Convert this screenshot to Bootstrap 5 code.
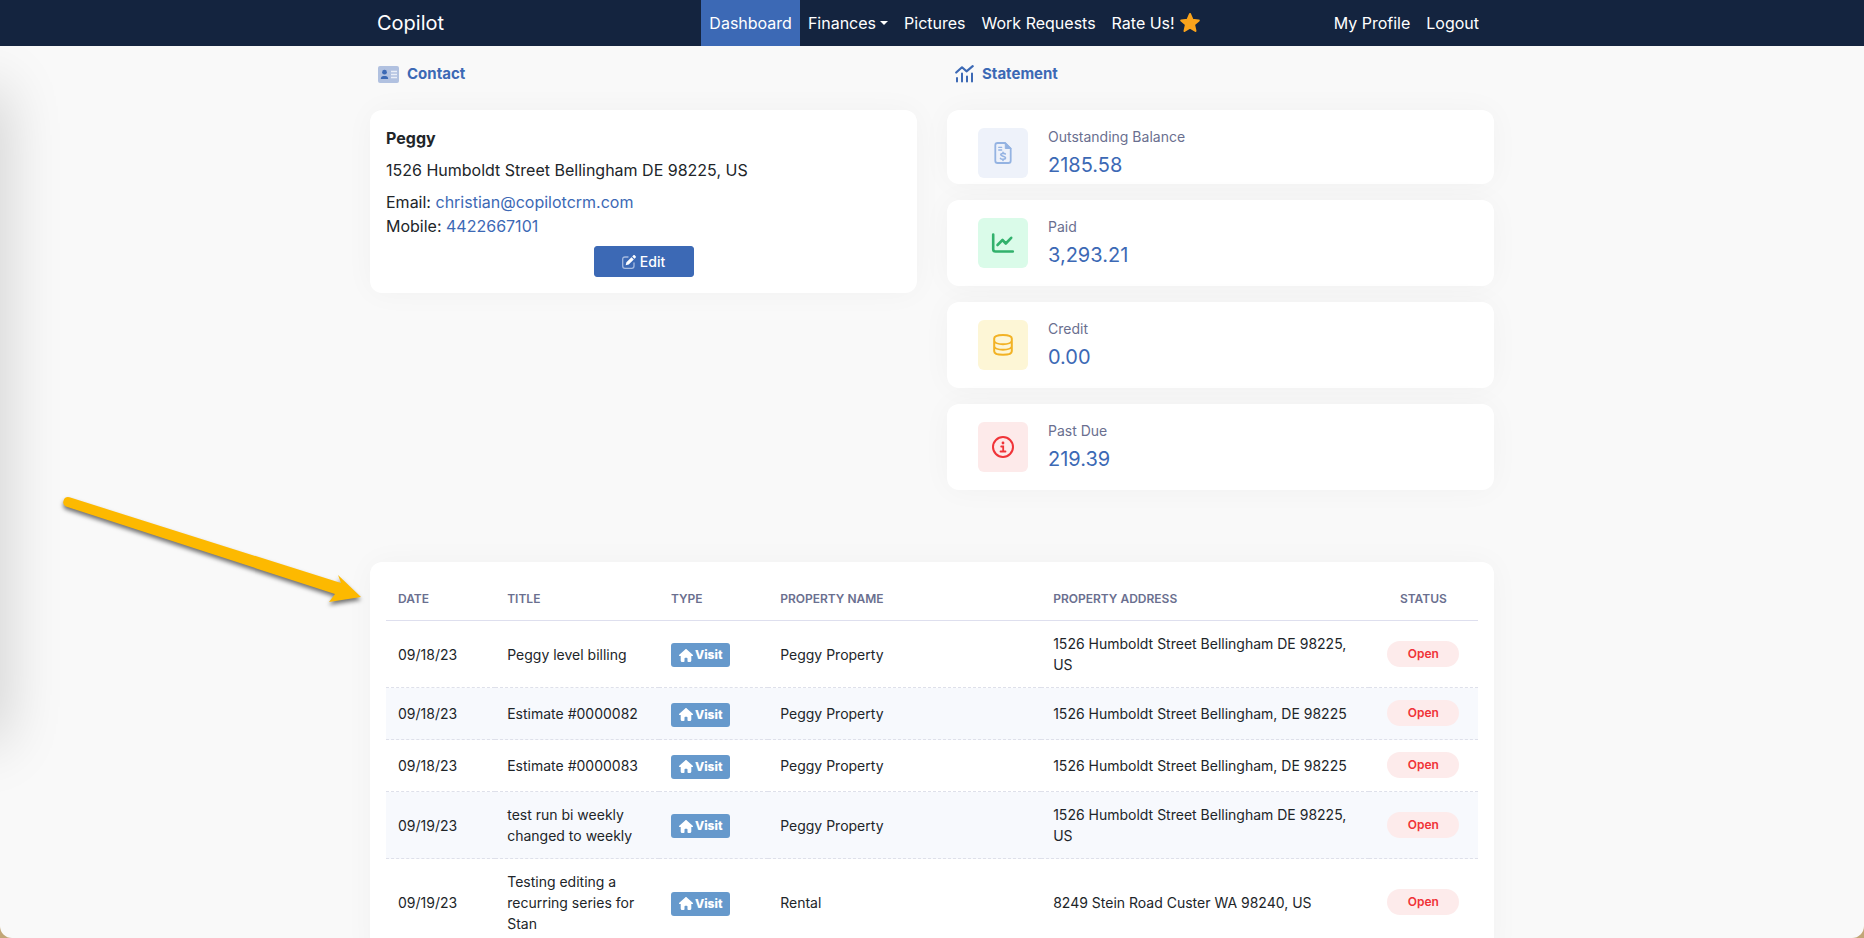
<!DOCTYPE html>
<html lang="en">
<head>
<meta charset="utf-8">
<meta name="viewport" content="width=device-width, initial-scale=1">
<title>Copilot</title>
<link href="https://cdn.jsdelivr.net/npm/bootstrap@5.3.0/dist/css/bootstrap.min.css" rel="stylesheet">
<style>
  :root { --brand: #3c69b5; --navy: #14243f; --muted: #6a6f8f; }
  html, body { height: 100%; }
  body { font-family: Inter, "Liberation Sans", sans-serif; font-size: 16px; line-height: 24px; color: #212529; background: #c2a677; }
  a { color: var(--brand); text-decoration: none; }
  .window { position: relative; height: 100vh; overflow: hidden auto; scrollbar-width: none; background: #f9f9f9; border-radius: 0 0 12px 12px; }
  .window::-webkit-scrollbar { display: none; }
  .edge-shade { position: absolute; left: -40px; top: 90px; width: 40px; height: 650px; box-shadow: 0 0 60px 0 rgba(0,0,0,.22); pointer-events: none; }
  .topbar { background: var(--navy); position: relative; z-index: 1; }
  .topbar-inner { max-width: 1110px; }
  .topbar .navbar-brand { color: #fff; font-size: 20px; line-height: 30px; }
  .topbar .nav-link { color: #fff; font-weight: 400; padding: 11px 8px; line-height: 24px; white-space: nowrap; }
  .topbar .nav-link.active { background: var(--brand); color: #fff; }
  .account-nav { margin-left: 117px; }
  .page { max-width: 1124px; }
  .page > .row { --bs-gutter-x: 30px; }
  .section-title { color: var(--brand); font-size: 15px; line-height: 24px; font-weight: 700; gap: 8px; padding: 16px 8px 24px; margin: 0; }
  .panel { background: #fff; border-radius: 12px; box-shadow: 0 0 30px rgba(0,0,0,.035); }
  .btn-edit { --bs-btn-color: #fff; --bs-btn-bg: var(--brand); --bs-btn-border-color: var(--brand); --bs-btn-hover-color: #fff; --bs-btn-hover-bg: #31589b; width: 100px; font-size: 14px; line-height: 21px; padding: 4px 8px; border-radius: 3px; font-weight: 500; }
  .stat { padding: 18px 31px; gap: 20px; margin-bottom: 16px; }
  .stat-tight { padding-bottom: 6px; }
  .stat-icon { width: 50px; height: 50px; border-radius: 6px; flex: none; }
  .stat-label { font-size: 14px; line-height: 18px; color: var(--muted); }
  .stat-value { font-size: 20px; line-height: 24px; color: var(--brand); margin-top: 7px; }
  .tint-blue { background: #eef2fa; color: #94b3e2; }
  .tint-green { background: #dafbe9; color: #32b16c; }
  .tint-yellow { background: #fdf6d6; color: #f2b224; }
  .tint-red { background: #fdeaea; color: #f03338; }
  .activity { margin-top: 56px; padding: 16px; position: relative; }
  .activity-table { table-layout: fixed; margin: 0; font-size: 14px; line-height: 21px; border-collapse: separate; border-spacing: 0; --bs-table-bg: transparent; }
  .activity-table th { font-size: 12px; line-height: 18px; font-weight: 600; color: var(--muted); text-transform: uppercase; padding: 12px; height: 43px; border-bottom: 1px solid #dedfee; white-space: nowrap; }
  .activity-table td { padding: 12px; height: 52px; vertical-align: middle; border-bottom: 1px dashed #dee0ea; color: #212529; }
  .activity-table tbody tr:nth-child(even) td { background: #f7f9fd; }
  .activity-table .status-cell { text-align: center; padding-left: 8px; padding-right: 8px; }
  .activity-table td.tag-cell { padding-top: 9px; padding-bottom: 7px; }
  .activity-table td.status-cell { padding-top: 7px; padding-bottom: 8px; }
  .tag-visit { background: #6699cc; color: #fff; font-size: 12px; line-height: 16px; font-weight: 800; padding: 4px 8px; border-radius: 3px; gap: 2px; vertical-align: middle; }
  .tag-open { background: #fdebeb; color: #f03338; font-size: 12px; line-height: 18px; font-weight: 600; width: 72px; padding: 4px 0; vertical-align: middle; }
  .pointer { position: absolute; left: -310px; top: -70px; overflow: visible; filter: drop-shadow(0 3px 2px rgba(0,0,0,.55)); pointer-events: none; }
</style>
</head>
<body>
<svg width="0" height="0" class="position-absolute" aria-hidden="true">
  <symbol id="house" viewBox="0 0 14 13"><path fill="currentColor" d="M6.200.4.300 5.700c-.6.600-.3 1.400.5 1.400h.9v4.400c0 .9.600 1.500 1.400 1.500h1.600c.5 0 .8-.3.800-.8V9.600c0-.5.300-.8.800-.8h1.400c.5 0 .8.300.8.800v2.600c0 .5.300.800.8.800h1.600c.8 0 1.400-.6 1.400-1.500V7.100h.9c.8 0 1.100-.8.500-1.400L7.800.4C7.300 0 6.700 0 6.200.4z"/></symbol>
</svg>
<div class="window">
  <div class="edge-shade"></div>
  <nav class="topbar navbar navbar-expand p-0">
    <div class="topbar-inner container-fluid p-0">
      <a class="navbar-brand p-0 m-0" href="#">Copilot</a>
      <ul class="navbar-nav ms-auto">
        <li class="nav-item"><a class="nav-link active" aria-current="page" href="#">Dashboard</a></li>
        <li class="nav-item dropdown"><a class="nav-link dropdown-toggle" href="#" role="button" data-bs-toggle="dropdown">Finances</a></li>
        <li class="nav-item"><a class="nav-link" href="#">Pictures</a></li>
        <li class="nav-item"><a class="nav-link" href="#">Work Requests</a></li>
        <li class="nav-item"><a class="nav-link d-flex align-items-center gap-1" href="#">Rate Us!
          <svg width="22" height="22" viewBox="0 0 22 22"><path d="M11 2l2.600 5.800 6.200.6-4.700 4.200 1.400 6.300-5.500-3.200-5.500 3.200 1.400-6.300L2.200 8.400l6.200-.6z" fill="#faa31b" stroke="#faa31b" stroke-width="2" stroke-linejoin="round"/></svg></a></li>
      </ul>
      <ul class="navbar-nav account-nav">
        <li class="nav-item"><a class="nav-link" href="#">My Profile</a></li>
        <li class="nav-item"><a class="nav-link" href="#">Logout</a></li>
      </ul>
    </div>
  </nav>

  <main class="page container-fluid p-0">
    <div class="row">
      <section class="col-6">
        <h2 class="section-title d-flex align-items-center">
          <svg width="21" height="17" viewBox="0 0 21 17"><rect width="21" height="17" rx="2" fill="#b1c1e0"/><circle cx="6.500" cy="6.200" r="2.400" fill="#3c69b5"/><path d="M2.800 13c0-2 1.200-3 2.700-3h2c1.500 0 2.700 1 2.700 3z" fill="#3c69b5"/><path d="M13 5.500h6M13 8.500h6M13 11.500h6" stroke="#e9eef8" stroke-width="1.300"/></svg>
          Contact</h2>
        <div class="panel p-3">
          <p class="fw-bold mb-2">Peggy</p>
          <p class="mb-2">1526 Humboldt Street Bellingham DE 98225, US</p>
          <div>Email: <a href="mailto:christian@copilotcrm.com">christian@copilotcrm.com</a></div>
          <div>Mobile: <a href="tel:4422667101">4422667101</a></div>
          <div class="d-flex justify-content-center pt-2">
            <button type="button" class="btn btn-edit d-flex align-items-center justify-content-center gap-1">
              <svg width="14" height="14" viewBox="0 0 14 14" fill="none"><path d="M6 2H3C1.500 2 .7 2.800.7 4.200V11c0 1.500.8 2.300 2.300 2.300h6.700c1.500 0 2.300-.8 2.300-2.300V8" stroke="#a6bbe0" stroke-width="1.300" stroke-linecap="round"/><path d="M3.700 10.300l.7-3L9.500 2.200l2.300 2.300-5.100 5.100zM10.200 1.500l1-1c.6-.6 1.200-.6 1.700 0l.6.6c.5.500.5 1.100 0 1.700l-1 1z" fill="#fff"/></svg>
              Edit</button>
          </div>
        </div>
      </section>

      <section class="col-6">
        <h2 class="section-title d-flex align-items-center">
          <svg width="19" height="18" viewBox="0 0 19 18" fill="none" stroke="#3c69b5" stroke-linecap="round" stroke-linejoin="round"><path d="M1.200 7.500 7 2.300l4.500 4L17.700 1.200" stroke-width="2.200"/><path d="M2 13v3.500M7 8.500v8M12 11.500v5M17 8.500v8" stroke-width="2"/></svg>
          Statement</h2>
        <div class="panel stat stat-tight d-flex">
          <div class="stat-icon tint-blue d-flex align-items-center justify-content-center">
            <svg width="18" height="24" viewBox="0 0 18 24" fill="none" stroke="currentColor" stroke-width="1.800" stroke-linecap="round" stroke-linejoin="round"><path d="M11 2H3.600C2.200 2 1.300 2.900 1.300 4.300v15.400c0 1.400.9 2.300 2.300 2.300h10.800c1.400 0 2.300-.9 2.300-2.300V7.600z"/><path d="M11.300 2v5.500h5.400z" fill="currentColor" stroke-width="1"/><path d="M4.700 6.300h3M4.700 9h3" stroke-width="1.300"/><path d="M11.300 13c-.5-.7-4.500-1.100-4.500.8s4.700 1 4.700 3-4.200 1.600-5 .6M9 11.200v1M9 18.400v1" stroke-width="1.600"/></svg>
          </div>
          <div><div class="stat-label">Outstanding Balance</div><div class="stat-value">2185.58</div></div>
        </div>
        <div class="panel stat d-flex">
          <div class="stat-icon tint-green d-flex align-items-center justify-content-center">
            <svg width="24" height="22" viewBox="0 0 24 22" fill="none" stroke="currentColor" stroke-width="2.600" stroke-linecap="round" stroke-linejoin="round"><path d="M2.200 2.500v14.700c0 1.500.8 2.300 2.300 2.300h17.300M6.500 13l5-5 3.300 3.500 5.400-5.700"/></svg>
          </div>
          <div><div class="stat-label">Paid</div><div class="stat-value">3,293.21</div></div>
        </div>
        <div class="panel stat d-flex">
          <div class="stat-icon tint-yellow d-flex align-items-center justify-content-center">
            <svg width="20" height="24" viewBox="0 0 20 24" fill="none" stroke="currentColor" stroke-width="2"><path d="M1.200 5.500C1.200 3.300 4.500 2 10 2s8.800 1.300 8.800 3.500v12.800c0 2.200-3.300 3.500-8.800 3.500s-8.800-1.300-8.800-3.500zM1.200 8C2 10 5.500 11.200 10 11.200s8-1.200 8.800-3.200M1.200 13.500c.8 2 4.300 3.200 8.800 3.200s8-1.200 8.800-3.200"/></svg>
          </div>
          <div><div class="stat-label">Credit</div><div class="stat-value">0.00</div></div>
        </div>
        <div class="panel stat d-flex">
          <div class="stat-icon tint-red d-flex align-items-center justify-content-center">
            <svg width="24" height="24" viewBox="0 0 24 24" fill="none" stroke="currentColor" stroke-width="2"><circle cx="12" cy="12" r="10"/><circle cx="12" cy="8" r="1.400" fill="currentColor" stroke="none"/><path d="M10.200 11.500h2v4.800M9.500 16.500h5" stroke-linecap="round" stroke-width="1.800"/></svg>
          </div>
          <div><div class="stat-label">Past Due</div><div class="stat-value">219.39</div></div>
        </div>
      </section>
    </div>

    <section class="panel activity">
      <svg class="pointer" width="305" height="115" viewBox="0 0 305 115" aria-hidden="true"><path d="M9.500 5.300A5 5 0 0 0 6 14.600L275 102l-6 8 32-5-23-22 3 8z" fill="#fdb900"/></svg>
      <table class="table table-borderless activity-table">
        <colgroup><col style="width:10%"><col style="width:15%"><col style="width:10%"><col style="width:25%"><col style="width:30%"><col style="width:10%"></colgroup>
        <thead>
          <tr><th scope="col">Date</th><th scope="col">Title</th><th scope="col">Type</th><th scope="col">Property Name</th><th scope="col">Property Address</th><th scope="col" class="status-cell">Status</th></tr>
        </thead>
        <tbody>
          <tr><td>09/18/23</td><td>Peggy level billing</td><td class="tag-cell"><span class="tag-visit d-inline-flex align-items-center"><svg width="14" height="13"><use href="#house"/></svg>Visit</span></td><td>Peggy Property</td><td>1526 Humboldt Street Bellingham DE 98225, US</td><td class="status-cell"><span class="tag-open d-inline-block rounded-pill">Open</span></td></tr>
          <tr><td>09/18/23</td><td>Estimate #0000082</td><td class="tag-cell"><span class="tag-visit d-inline-flex align-items-center"><svg width="14" height="13"><use href="#house"/></svg>Visit</span></td><td>Peggy Property</td><td>1526 Humboldt Street Bellingham, DE 98225</td><td class="status-cell"><span class="tag-open d-inline-block rounded-pill">Open</span></td></tr>
          <tr><td>09/18/23</td><td>Estimate #0000083</td><td class="tag-cell"><span class="tag-visit d-inline-flex align-items-center"><svg width="14" height="13"><use href="#house"/></svg>Visit</span></td><td>Peggy Property</td><td>1526 Humboldt Street Bellingham, DE 98225</td><td class="status-cell"><span class="tag-open d-inline-block rounded-pill">Open</span></td></tr>
          <tr><td>09/19/23</td><td>test run bi weekly changed to weekly</td><td class="tag-cell"><span class="tag-visit d-inline-flex align-items-center"><svg width="14" height="13"><use href="#house"/></svg>Visit</span></td><td>Peggy Property</td><td>1526 Humboldt Street Bellingham DE 98225, US</td><td class="status-cell"><span class="tag-open d-inline-block rounded-pill">Open</span></td></tr>
          <tr><td>09/19/23</td><td>Testing editing a recurring series for Stan</td><td class="tag-cell"><span class="tag-visit d-inline-flex align-items-center"><svg width="14" height="13"><use href="#house"/></svg>Visit</span></td><td>Rental</td><td>8249 Stein Road Custer WA 98240, US</td><td class="status-cell"><span class="tag-open d-inline-block rounded-pill">Open</span></td></tr>
        </tbody>
      </table>
    </section>
  </main>
</div>
<script src="https://cdn.jsdelivr.net/npm/bootstrap@5.3.0/dist/js/bootstrap.bundle.min.js"></script>
</body>
</html>
